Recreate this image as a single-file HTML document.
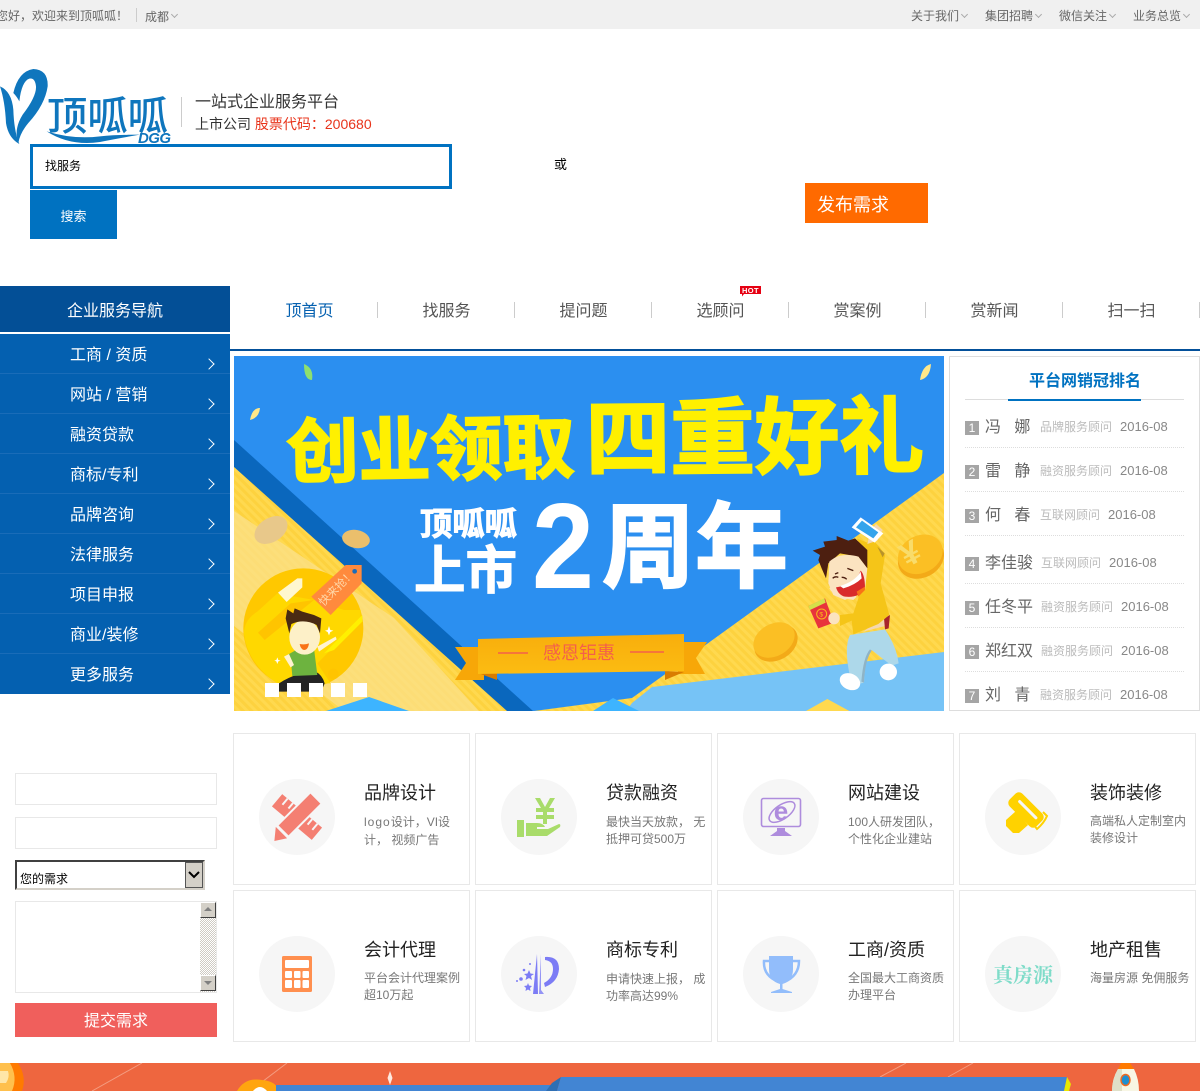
<!DOCTYPE html>
<html lang="zh-CN">
<head>
<meta charset="utf-8">
<title>顶呱呱</title>
<style>
*{box-sizing:border-box;margin:0;padding:0}
html,body{width:1200px;height:1091px;overflow:hidden;background:#fff}
body{position:relative;font-family:"Liberation Sans","Noto Sans CJK SC",sans-serif;color:#333}
.t{position:absolute;white-space:nowrap}
.b{position:absolute}
.p{font-family:"Noto Sans CJK TC",sans-serif}
.top{left:0;top:0;width:1200px;height:29px;background:#f0f0f0}
.top .t{font-size:12px;line-height:16px;top:8px;color:#666}
.cv{position:absolute;width:5px;height:5px;border-right:1px solid #aaa;border-bottom:1px solid #aaa;transform:rotate(45deg);top:12px}
.menu{left:0;top:334px;width:230px;height:360px;background:#0460b0}
.menu div{position:relative;height:40px;border-bottom:1px solid #1a6cb8;color:#fff;font-size:16px;line-height:44px;padding-left:70px;white-space:nowrap}
.menu div:last-child{border-bottom:0}
.menu i{position:absolute;left:205px;top:26px;width:8px;height:8px;border-top:1px solid #fff;border-right:1px solid #fff;transform:rotate(45deg)}
.nv{top:302px;width:137px;text-align:center;font-size:16px;line-height:20px;color:#555}
.sp{position:absolute;top:302px;width:1px;height:16px;background:#ccc}
.rk{left:965px;width:14px;height:14px;background:#a5a5a5;color:#fff;font-size:12px;line-height:14px;text-align:center}
.nm{left:985px;font-size:16px;line-height:20px;color:#666;margin-top:1px}
.rl{font-size:12px;line-height:16px;color:#bbb}
.dt{font-size:13px;line-height:16px;color:#888}
.dl{position:absolute;left:965px;width:219px;height:0;border-top:1px dotted #ddd}
.card{position:absolute;width:237px;height:152px;border:1px solid #e8e8e8;background:#fff}
.card svg{position:absolute;left:25px;top:45px}
.card h3{position:absolute;left:130px;top:47px;font-weight:normal;font-size:18px;line-height:24px;color:#222;white-space:nowrap}
.card p{position:absolute;left:130px;top:79px;font-size:12px;line-height:17px;color:#777;white-space:nowrap}
.f{position:absolute;left:15px;width:202px;border:1px solid #e8e8e8;background:#fff;outline:0;display:block}
</style>
</head>
<body>
<div class="b top">
  <span class="t" style="left:-4px">您好<span class="p">，</span>欢迎来到顶呱呱<span class="p">！</span></span>
  <span class="b" style="left:136px;top:8px;width:1px;height:14px;background:#ccc"></span>
  <span class="t" style="left:145px;top:9px">成都</span><i class="cv" style="left:172px"></i>
  <span class="t" style="left:911px">关于我们</span><i class="cv" style="left:962px"></i>
  <span class="t" style="left:985px">集团招聘</span><i class="cv" style="left:1036px"></i>
  <span class="t" style="left:1059px">微信关注</span><i class="cv" style="left:1110px"></i>
  <span class="t" style="left:1133px">业务总览</span><i class="cv" style="left:1184px"></i>
</div>

<!-- logo -->
<svg class="b" style="left:0;top:68px" width="180" height="80" viewBox="0 0 180 80">
  <g transform="scale(.3333)" fill="#0f76bd">
    <path d="M0 55Q35 70 40 125Q42 190 58 228Q25 210 18 165Q15 100 0 55Z"/>
    <path d="M40 75Q55 10 100 3Q145 5 143 55Q135 110 85 165Q60 195 55 225Q40 185 68 140Q110 85 108 55Q105 28 88 32Q65 40 58 100Q50 85 40 75Z"/>
    <path d="M140 190Q220 215 300 205Q350 200 420 200Q350 212 300 222Q210 235 140 190Z"/>
  </g>
  <text x="47" y="62" font-size="40" font-weight="500" fill="#0f76bd" textLength="121" lengthAdjust="spacingAndGlyphs" font-family="'Noto Sans CJK SC',sans-serif">顶呱呱</text>
  <text x="138" y="75" font-size="15" font-weight="700" font-style="italic" fill="#0f76bd" textLength="33" font-family="'Liberation Sans',sans-serif">DGG</text>
</svg>
<span class="b" style="left:181px;top:97px;width:1px;height:30px;background:#ccc"></span>
<span class="t" style="left:195px;top:92px;font-size:16px;line-height:22px;color:#333">一站式企业服务平台</span>
<span class="t" style="left:195px;top:114px;font-size:14px;line-height:20px;color:#333">上市公司 <span style="color:#e8331a">股票代码<span class="p">：</span>200680</span></span>

<!-- search -->
<div class="b" style="left:30px;top:144px;width:422px;height:45px;border:3px solid #0072c1;background:#fff"></div>
<span class="t" style="left:45px;top:158px;font-size:12px;line-height:16px;color:#000">找服务</span>
<div class="b" style="left:30px;top:190px;width:87px;height:49px;background:#0072c1;color:#fff;font-size:13px;line-height:54px;text-align:center">搜索</div>
<span class="t" style="left:554px;top:157px;font-size:13px;line-height:16px;color:#000">或</span>
<div class="b" style="left:805px;top:183px;width:123px;height:40px;background:#ff6a00;color:#fff;font-size:18px;line-height:44px;padding-left:12px">发布需求</div>

<!-- side nav -->
<div class="b" style="left:0;top:286px;width:230px;height:46px;background:#034f96;color:#fff;font-size:16px;line-height:51px;text-align:center">企业服务导航</div>
<div class="b menu">
  <div>工商 / 资质<i></i></div>
  <div>网站 / 营销<i></i></div>
  <div>融资贷款<i></i></div>
  <div>商标/专利<i></i></div>
  <div>品牌咨询<i></i></div>
  <div>法律服务<i></i></div>
  <div>项目申报<i></i></div>
  <div>商业/装修<i></i></div>
  <div>更多服务<i></i></div>
</div>

<!-- main nav -->
<span class="t nv" style="left:241px;color:#0460b0">顶首页</span>
<span class="t nv" style="left:378px">找服务</span>
<span class="t nv" style="left:515px">提问题</span>
<span class="t nv" style="left:652px">选顾问</span>
<span class="t nv" style="left:789px">赏案例</span>
<span class="t nv" style="left:926px">赏新闻</span>
<span class="t nv" style="left:1063px">扫一扫</span>
<i class="sp" style="left:377px"></i><i class="sp" style="left:514px"></i><i class="sp" style="left:651px"></i><i class="sp" style="left:788px"></i><i class="sp" style="left:925px"></i><i class="sp" style="left:1062px"></i><i class="sp" style="left:1199px"></i>
<svg class="b" style="left:740px;top:286px" width="22" height="11" viewBox="0 0 22 11">
  <path d="M0 0H21V8H4L2 10.5V8H0Z" fill="#e60012"/>
  <text x="10.5" y="7" font-size="7.5" font-weight="700" fill="#fff" text-anchor="middle" letter-spacing=".4" font-family="'Liberation Sans',sans-serif">HOT</text>
</svg>
<div class="b" style="left:230px;top:349px;width:970px;height:2px;background:#03509a"></div>

<!-- hero -->
<svg class="b" style="left:234px;top:356px" width="710" height="355" viewBox="0 0 710 355">
  <defs>
    <pattern id="st" width="6" height="6" patternUnits="userSpaceOnUse" patternTransform="rotate(-45)">
      <rect width="6" height="6" fill="#ffd94f"/><rect width="3" height="6" fill="#fdd23f"/>
    </pattern>
    <linearGradient id="rb" x1="0" y1="0" x2="0" y2="1"><stop offset="0" stop-color="#f8ae0c"/><stop offset="1" stop-color="#fcbc12"/></linearGradient>
  </defs>
  <rect width="710" height="355" fill="#2b8ff0"/>
  <path d="M0 84L299 355H267L0 111Z" fill="#0a67bd"/>
  <path d="M0 111L273 355H0Z" fill="url(#st)"/>
  <path d="M0 155L160 262L245 355H110L0 270Z" fill="#fbe08a" opacity=".75"/>
  <path d="M710 117V355H300L398 342Z" fill="url(#st)"/>
  <path d="M398 347L418 331L710 296V355H392Z" fill="#76c3f6"/>
  <path d="M92 355L135 341L175 355Z" fill="#3db4ff"/>
  <path d="M359 355L379 342L405 355Z" fill="#3db4ff"/>
  <path d="M70 8Q80 12 78 24Q70 24 70 8Z" fill="#8ee06f"/>
  <path d="M16 64Q18 52 26 52Q25 62 16 64Z" fill="#ffe88a"/>
  <path d="M686 24Q688 10 697 8Q696 22 686 24Z" fill="#ffe88a"/>
  <ellipse cx="37" cy="174" rx="18" ry="12" transform="rotate(-32 37 174)" fill="#e8c88a"/>
  <ellipse cx="122" cy="183" rx="14" ry="9" transform="rotate(10 122 183)" fill="#ebbf6c"/>
  <ellipse cx="542" cy="287" rx="23" ry="17" transform="rotate(-30 542 287)" fill="#f3aa18"/>
  <ellipse cx="540" cy="284" rx="22" ry="16" transform="rotate(-30 540 284)" fill="#fbbf24"/>

  <g fill="#fff000" font-family="'Noto Sans CJK SC',sans-serif" font-weight="700" stroke="#fff000" stroke-width="2">
    <text transform="translate(53 121) rotate(-1)" font-size="70" textLength="288" lengthAdjust="spacingAndGlyphs">创业领取</text>
    <text transform="translate(352 113) rotate(-.5)" font-size="84" textLength="338" lengthAdjust="spacingAndGlyphs">四重好礼</text>
  </g>
  <g fill="#fff" font-family="'Noto Sans CJK SC',sans-serif" font-weight="700" stroke="#fff" stroke-width="1">
    <text x="186" y="179" font-size="32" textLength="97" lengthAdjust="spacingAndGlyphs">顶呱呱</text>
    <text x="180" y="233" font-size="52" textLength="103" lengthAdjust="spacingAndGlyphs">上市</text>
    <text x="368" y="224" font-size="93" textLength="186" lengthAdjust="spacingAndGlyphs" stroke-width="2">周年</text>
  </g>
  <text x="298" y="232" font-size="122" font-weight="700" fill="#fff" textLength="62" lengthAdjust="spacingAndGlyphs" font-family="'Liberation Sans',sans-serif">2</text>

  <!-- ribbon -->
  <path d="M221 291H250V324H221L232 307Z" fill="#f7a708"/>
  <path d="M473 286H444V318H471L462 302Z" fill="#f7a708"/>
  <path d="M244 317L263 324V316Z" fill="#d97c00"/>
  <path d="M450 316L431 324V315Z" fill="#d97c00"/>
  <path d="M244 283L450 278V315L244 318Z" fill="url(#rb)"/>
  <path d="M264 297H294M396 296H430" stroke="#f4604a" stroke-width="1.5"/>
  <text x="309" y="303" font-size="18" fill="#f4604a" font-family="'Noto Sans CJK SC',sans-serif">感恩钜惠</text>

  <!-- left character -->
  <g transform="translate(0 194) scale(.3333)">
    <circle cx="208" cy="235" r="180" fill="#ffc800"/>
    <path d="M30 250Q30 210 70 185L130 130L240 150L330 180L380 180V210L250 340L290 400H130Q40 340 30 250Z" fill="#ffd800"/>
    <path d="M270 310L385 195V215L300 300Z" fill="#fff000"/>
    <path d="M72 248L170 160L240 150L92 270Z" fill="#ffc400"/>
    <path d="M132 128L190 85H205V112L158 156Z" fill="#fff7cf"/>
    <circle cx="298" cy="372" r="16" fill="#ffc400"/>
    <path d="M232 140L335 45H383V100L290 195Z" fill="#ff8a3d"/>
    <circle cx="362" cy="64" r="7" fill="#1c6cb8"/>
    <text transform="translate(268 170) rotate(-45)" font-size="34" fill="#ffd7a8" font-family="'Noto Sans CJK SC',sans-serif">快来抢！</text>
    <path d="M135 400Q190 365 245 365Q265 375 272 400L262 425H135Z" fill="#242424"/>
    <path d="M160 315L195 295L240 295L250 375L175 378L172 345L160 335Z" fill="#6db33f"/>
    <path d="M250 290L305 260L308 268L255 305Z" fill="#fff3d0"/>
    <path d="M150 320L165 312L180 345L170 352Z" fill="#fff3d0"/>
    <ellipse cx="212" cy="262" rx="46" ry="52" fill="#fdf0c8"/>
    <path d="M155 205L160 178L178 190L182 175L205 185L240 195L262 205L258 250L248 225Q210 205 172 222L166 250Z" fill="#4a2a12"/>
    <path d="M197 282Q212 285 225 280Q222 300 210 300Q200 298 197 282Z" fill="#f97316"/>
    <path d="M285 228L289 240L298 242L289 246L285 256L281 246L273 242L281 240Z" fill="#fff"/>
    <path d="M130 322L133 330L140 332L133 334L130 342L127 334L121 332L127 330Z" fill="#fff"/>
  </g>

  <!-- right character -->
  <g transform="translate(556 144) scale(.3333)">
    <path d="M48 633L112 597L178 633Z" fill="#ffd94f"/>
    <ellipse cx="393" cy="175" rx="72" ry="58" transform="rotate(-28 393 175)" fill="#f3aa18"/>
    <ellipse cx="391" cy="163" rx="70" ry="56" transform="rotate(-28 391 163)" fill="#fbbf24"/>
    <text transform="translate(352 203) rotate(-28)" font-size="100" font-weight="700" fill="#f9dc6a" font-family="'Liberation Sans',sans-serif">¥</text>
    <path d="M180 405L285 388Q320 440 326 490L305 497L245 450Q225 470 222 548L205 552L178 520Q162 440 180 405Z" fill="#add8ea"/>
    <path d="M240 448Q220 470 214 545L222 548Q225 480 245 452Z" fill="#8fb4c6"/>
    <ellipse cx="180" cy="545" rx="32" ry="24" transform="rotate(25 180 545)" fill="#fff"/>
    <ellipse cx="295" cy="516" rx="26" ry="25" fill="#fff"/>
    <path d="M220 395L285 378L300 345L280 350Z" fill="#f4d7b0"/>
    <path d="M282 355L300 345L296 385L285 388Z" fill="#a8252b"/>
    <path d="M200 115L232 128L238 110L268 140L285 165L272 250L298 345L265 372L190 403L185 362L150 378L150 345L190 340L222 245L228 165Z" fill="#f5c518"/>
    <path d="M262 140L284 160L278 172Z" fill="#b8932a"/>
    <path d="M232 132L262 122L278 90L258 72L240 95Z" fill="#f4d7b0"/>
    <path d="M185 82L212 52L280 100L254 128Z" fill="#fff"/>
    <path d="M198 82L216 62L265 97L250 115Z" fill="#35a4ec"/>
    <path d="M68 152L105 140L100 125L140 120L140 108L175 122L195 115L232 150L232 205L205 170L150 160L115 190L108 235L95 205L85 180L90 165Z" fill="#4d1f10"/>
    <path d="M118 185Q150 155 205 170L232 205L225 270L165 300L130 285L115 250Z" fill="#fbe3c0"/>
    <path d="M118 265Q130 290 190 300L200 290L130 255Z" fill="#fbe3c0"/>
    <path d="M138 262Q195 255 212 212Q225 225 225 265Q205 295 165 290Q145 285 138 262Z" fill="#d92b2b"/>
    <path d="M150 258Q195 245 212 215L215 235Q195 255 160 265Z" fill="#fff"/>
    <path d="M200 275L225 260V270L205 290Z" fill="#f97316"/>
    <path d="M128 235Q135 228 145 232M155 232Q165 232 170 238M172 205L190 212M135 222L145 218" stroke="#4d1f10" stroke-width="4" fill="none"/>
    <path d="M55 318L105 295L132 368L85 385Z" fill="#e8343c"/>
    <path d="M55 318L103 295L107 308L60 330Z" fill="#d4e04a"/>
    <circle cx="95" cy="342" r="15" fill="none" stroke="#f9b81c" stroke-width="3"/>
    <text x="88" y="350" font-size="20" fill="#f9b81c" font-family="'Liberation Sans',sans-serif">$</text>
    <ellipse cx="132" cy="355" rx="17" ry="18" fill="#fbe3c0"/>
  </g>
</svg>
<div class="b" style="left:265px;top:683px;width:14px;height:14px;background:#fff"></div>
<div class="b" style="left:287px;top:683px;width:14px;height:14px;background:#fff"></div>
<div class="b" style="left:309px;top:683px;width:14px;height:14px;background:#fff"></div>
<div class="b" style="left:331px;top:683px;width:14px;height:14px;background:#fff"></div>
<div class="b" style="left:353px;top:683px;width:14px;height:14px;background:#fff"></div>

<!-- ranking -->
<div class="b" style="left:949px;top:356px;width:251px;height:355px;border:1px solid #ddd;background:#fff"></div>
<span class="t" style="left:1029px;top:371px;font-size:16px;line-height:22px;font-weight:700;color:#0072c1">平台网销冠排名</span>
<div class="b" style="left:965px;top:399px;width:219px;height:1px;background:#ddd"></div>
<div class="b" style="left:1008px;top:399px;width:133px;height:2px;background:#0072c1"></div>

<span class="t rk" style="top:421px">1</span><span class="t nm" style="top:417px">冯&nbsp;&nbsp;&nbsp;娜</span><span class="t rl" style="left:1040px;top:419px">品牌服务顾问</span><span class="t dt" style="left:1120px;top:419px">2016-08</span><i class="dl" style="top:447px"></i>
<span class="t rk" style="top:465px">2</span><span class="t nm" style="top:461px">雷&nbsp;&nbsp;&nbsp;静</span><span class="t rl" style="left:1040px;top:463px">融资服务顾问</span><span class="t dt" style="left:1120px;top:463px">2016-08</span><i class="dl" style="top:491px"></i>
<span class="t rk" style="top:509px">3</span><span class="t nm" style="top:505px">何&nbsp;&nbsp;&nbsp;春</span><span class="t rl" style="left:1040px;top:507px">互联网顾问</span><span class="t dt" style="left:1108px;top:507px">2016-08</span><i class="dl" style="top:535px"></i>
<span class="t rk" style="top:557px">4</span><span class="t nm" style="top:553px">李佳骏</span><span class="t rl" style="left:1041px;top:555px">互联网顾问</span><span class="t dt" style="left:1109px;top:555px">2016-08</span><i class="dl" style="top:583px"></i>
<span class="t rk" style="top:601px">5</span><span class="t nm" style="top:597px">任冬平</span><span class="t rl" style="left:1041px;top:599px">融资服务顾问</span><span class="t dt" style="left:1121px;top:599px">2016-08</span><i class="dl" style="top:627px"></i>
<span class="t rk" style="top:645px">6</span><span class="t nm" style="top:641px">郑红双</span><span class="t rl" style="left:1041px;top:643px">融资服务顾问</span><span class="t dt" style="left:1121px;top:643px">2016-08</span><i class="dl" style="top:671px"></i>
<span class="t rk" style="top:689px">7</span><span class="t nm" style="top:685px">刘&nbsp;&nbsp;&nbsp;青</span><span class="t rl" style="left:1040px;top:687px">融资服务顾问</span><span class="t dt" style="left:1120px;top:687px">2016-08</span>

<!-- form -->
<input class="f" style="top:773px;height:32px" type="text">
<input class="f" style="top:817px;height:32px" type="text">
<div class="b" style="left:15px;top:860px;width:190px;height:30px;background:#fff;border-top:2px solid #404040;border-left:2px solid #404040;border-right:2px solid #d4d0c8;border-bottom:2px solid #d4d0c8;font-size:12px;line-height:16px;color:#000;padding:9px 0 0 3px">您的需求</div>
<div class="b" style="left:185px;top:862px;width:18px;height:26px;background:#d4d0c8;border:1px solid #555"></div>
<svg class="b" style="left:188px;top:870px" width="12" height="9"><path d="M1 2L6 7L11 2" fill="none" stroke="#000" stroke-width="2"/></svg>
<div class="f" style="top:901px;height:92px"></div>
<div class="b" style="left:200px;top:902px;width:16px;height:90px;background:repeating-conic-gradient(#cfcbc3 0 25%,#fff 0 50%) 0 0/2px 2px"></div>
<div class="b" style="left:200px;top:902px;width:16px;height:16px;background:#d4d0c8;border-right:1px solid #404040;border-bottom:1px solid #404040;border-top:1px solid #fff;border-left:1px solid #fff"></div>
<svg class="b" style="left:203px;top:906px" width="10" height="7"><path d="M5 1L9 5H1Z" fill="#808080"/></svg>
<div class="b" style="left:200px;top:975px;width:16px;height:16px;background:#d4d0c8;border-right:1px solid #404040;border-bottom:1px solid #404040;border-top:1px solid #fff;border-left:1px solid #fff"></div>
<svg class="b" style="left:203px;top:980px" width="10" height="7"><path d="M1 1H9L5 5Z" fill="#808080"/></svg>
<div class="b" style="left:15px;top:1003px;width:202px;height:34px;background:#f05f5c;color:#fff;font-size:16px;line-height:38px;text-align:center">提交需求</div>

<!-- cards -->
<div class="card" style="left:233px;top:733px">
  <svg width="76" height="76" viewBox="0 0 76 76"><circle cx="38" cy="38" r="38" fill="#f6f6f6"/>
    <g fill="#f47f72">
      <g transform="translate(38 38) rotate(40)"><rect x="-26" y="-8" width="52" height="16"/><path d="M-19 -8V0M-12 -8V-1M-5 -8V0M6 -8V0M13 -8V-1M20 -8V0" stroke="#f6f6f6" stroke-width="2"/></g>
      <g transform="translate(38 38) rotate(-45)"><rect x="-20" y="-8" width="47" height="16" stroke="#f6f6f6" stroke-width="2"/><path d="M-22 -8L-33 1L-22 8Z"/></g>
    </g></svg>
  <h3>品牌设计</h3><p><span style="letter-spacing:1px">logo</span>设计<span class="p">，</span>VI设<br>计<span class="p">，</span> 视频广告</p>
</div>
<div class="card" style="left:475px;top:733px">
  <svg width="76" height="76" viewBox="0 0 76 76"><circle cx="38" cy="38" r="38" fill="#f6f6f6"/>
    <g fill="#a9dc6a"><rect x="16" y="41" width="7" height="17"/>
    <path d="M25 44H36Q42 44 44 48H36V50H47L58 45Q60 45 59 48L46 57H25Z"/>
    <path d="M34 19H39L44 28L49 19H54L48 29H53V33H46V36H53V40H46V45H42V40H35V36H42V33H35V29H40Z"/></g></svg>
  <h3>贷款融资</h3><p>最快当天放款<span class="p">，</span> 无<br>抵押可贷500万</p>
</div>
<div class="card" style="left:717px;top:733px">
  <svg width="76" height="76" viewBox="0 0 76 76"><circle cx="38" cy="38" r="38" fill="#f6f6f6"/>
    <rect x="18.5" y="19.5" width="39" height="28" rx="2" fill="none" stroke="#ae8cdd" stroke-width="1.6"/>
    <ellipse cx="39" cy="33" rx="15" ry="7" transform="rotate(-35 39 33)" fill="none" stroke="#ae8cdd" stroke-width="1.5"/>
    <text x="38" y="41" font-size="26" font-weight="700" fill="#ae8cdd" text-anchor="middle" font-family="'Liberation Sans',sans-serif">e</text>
    <path d="M34 49H42V52L49 57H27L34 52Z" fill="#ae8cdd"/></svg>
  <h3>网站建设</h3><p>100人研发团队<span class="p">，</span><br>个性化企业建站</p>
</div>
<div class="card" style="left:959px;top:733px">
  <svg width="76" height="76" viewBox="0 0 76 76"><circle cx="38" cy="38" r="38" fill="#f6f6f6"/>
    <g transform="translate(41 31) rotate(45)"><rect x="-19" y="-9" width="38" height="18" rx="5" fill="#ffd200"/><rect x="-12" y="-3" width="26" height="3" rx="1.5" fill="#f6f6f6"/></g>
    <path d="M58 33L62 37Q59 44 52 50L48 45" fill="none" stroke="#ffd200" stroke-width="2"/>
    <path d="M31 32L43 46L34 54H28L21 47V41Z" fill="#ffd200"/></svg>
  <h3>装饰装修</h3><p>高端私人定制室内<br>装修设计</p>
</div>
<div class="card" style="left:233px;top:890px">
  <svg width="76" height="76" viewBox="0 0 76 76"><circle cx="38" cy="38" r="38" fill="#f6f6f6"/>
    <rect x="23" y="20" width="30" height="36" rx="1.5" fill="#ff8f4f"/>
    <rect x="26" y="24" width="24" height="8" rx="1" fill="#fff"/>
    <g fill="#fff"><rect x="26" y="35" width="7" height="7" rx="1"/><rect x="35" y="35" width="6.5" height="7" rx="1"/><rect x="43.5" y="35" width="6.5" height="7" rx="1"/><rect x="26" y="44" width="7" height="8" rx="1"/><rect x="35" y="44" width="6.5" height="8" rx="1"/><rect x="43.5" y="44" width="6.5" height="8" rx="1"/></g></svg>
  <h3>会计代理</h3><p>平台会计代理案例<br>超10万起</p>
</div>
<div class="card" style="left:475px;top:890px">
  <svg width="76" height="76" viewBox="0 0 76 76"><circle cx="38" cy="38" r="38" fill="#f6f6f6"/>
    <g fill="#7c7cf5"><path d="M36 18L37 58H32Z"/><path d="M40 18V54L43 58H38Z" opacity=".8"/>
    <path d="M44 21Q58 20 58 33Q57 46 44 51L43 47Q52 42 52 33Q52 25 44 24Z"/>
    <path d="M28 34L29.5 37.5L33 38L30 40L31 44L28 42L24.5 44L25.5 40L23 38L26.5 37.5Z"/>
    <path d="M27 47L28 49.5L31 50L29 52L29.5 55L27 53.5L24.5 55L25 52L23 50L26 49.5Z"/>
    <circle cx="20" cy="43" r="1.8"/><circle cx="23" cy="34" r="1.3"/><circle cx="29" cy="28" r="1"/><circle cx="16" cy="45" r="1"/></g></svg>
  <h3>商标专利</h3><p>申请快速上报<span class="p">，</span> 成<br>功率高达99%</p>
</div>
<div class="card" style="left:717px;top:890px">
  <svg width="76" height="76" viewBox="0 0 76 76"><circle cx="38" cy="38" r="38" fill="#f6f6f6"/>
    <g fill="#92bdfb"><path d="M26 20H50V33Q50 45 39.5 48V53L49 56V57H28V56L37 53V48Q26 45 26 33Z"/></g>
    <path d="M26 25H21Q20 40 36 46M50 25H56Q56 40 41 46" fill="none" stroke="#92bdfb" stroke-width="2.5"/></svg>
  <h3>工商/资质</h3><p>全国最大工商资质<br>办理平台</p>
</div>
<div class="card" style="left:959px;top:890px">
  <svg width="76" height="76" viewBox="0 0 76 76"><circle cx="38" cy="38" r="38" fill="#f6f6f6"/>
    <text x="38" y="46" font-size="20" font-weight="700" fill="#7fdcc9" text-anchor="middle" font-family="'Noto Serif CJK SC',serif">真房源</text></svg>
  <h3>地产租售</h3><p>海量房源 免佣服务</p>
</div>

<!-- bottom band -->
<svg class="b" style="left:0;top:1063px" width="1200" height="28" viewBox="0 0 1200 28">
  <rect width="1200" height="28" fill="#ee663f"/>
  <path d="M142 0L92 28M287 0L250 28M906 0L880 14M973 0L948 14" stroke="#f6b49c" stroke-width="1" fill="none" opacity=".7"/>
  <path d="M0 0H18Q27 14 22 28H0Z" fill="#ff7a00"/>
  <path d="M0 0H10Q18 14 12 28H0Z" fill="#ffc04d"/>
  <path d="M0 8H8Q10 14 6 20H0Z" fill="#ffe6a8"/>
  <path d="M237 28Q245 14 262 17Q276 18 279 28Z" fill="#ffa50f"/>
  <path d="M253 28Q260 20 267 28Z" fill="#fff"/>
  <path d="M276 22H551V28H276Z" fill="#4285d3"/>
  <path d="M546 28L552 20L561 14L557 28Z" fill="#2f6fb3"/>
  <path d="M557 28L561 14H1067L1064 28Z" fill="#4285d3"/>
  <path d="M1064 28L1067 14L1071 21L1069 28Z" fill="#e8e800"/>
  <path d="M390 8L392.5 15L390 22L387.5 15Z" fill="#fde8e0"/>
  <path d="M1118 6L1121 0H1130L1134 6Z" fill="#ff7a00"/>
  <path d="M1118 6H1134Q1139 16 1139 28H1112Q1112 16 1118 6Z" fill="#f8f6e4"/>
  <path d="M1112 28Q1112 16 1118 6H1122V28Z" fill="#dfe0c8"/>
  <ellipse cx="1125.5" cy="17" rx="4.5" ry="5.5" fill="#1f8fd0" stroke="#f06a20" stroke-width="1.5"/>
</svg>
</body>
</html>
